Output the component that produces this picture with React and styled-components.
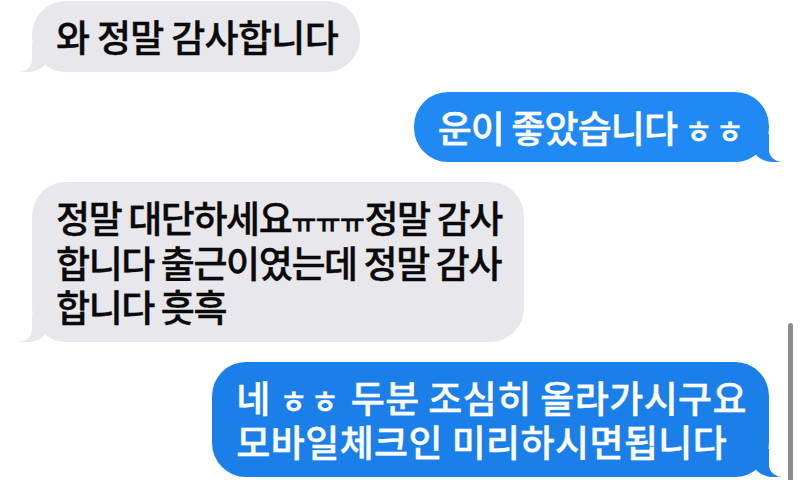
import React from 'react';
import styled, { createGlobalStyle, css } from 'styled-components';

const GlobalStyle = createGlobalStyle`
    html, body {
        margin: 0;
        padding: 0;
        background: #ffffff;
        overflow: hidden;
    }
`;

const Screen = styled.div`
    position: relative;
    width: 800px;
    height: 480px;
    overflow: hidden;
    background: #ffffff;
    font-family: "Noto Sans CJK KR", "Noto Sans", sans-serif;
`;

const Thread = styled.div`
    display: flex;
    flex-direction: column;
    gap: 20px;
    padding-top: 1px;
`;

const Row = styled.div`
    display: flex;
    justify-content: ${(p) => (p.$mine ? 'flex-end' : 'flex-start')};
    padding: ${(p) => (p.$mine ? '0 31px 0 0' : '0 0 0 32px')};
`;

const leftTail = css`
    &::before {
        content: '';
        position: absolute;
        bottom: 0;
        left: -12px;
        width: 30px;
        height: 28px;
        background: ${(p) => p.$bg};
        border-bottom-right-radius: 22px 20px;
    }
    &::after {
        content: '';
        position: absolute;
        bottom: 0;
        left: -15px;
        width: 15px;
        height: 28px;
        background: #ffffff;
        border-bottom-right-radius: 14px 12px;
    }
`;

const rightTail = css`
    &::before {
        content: '';
        position: absolute;
        bottom: 0;
        right: -12px;
        width: 30px;
        height: 28px;
        background: ${(p) => p.$bg};
        border-bottom-left-radius: 22px 20px;
    }
    &::after {
        content: '';
        position: absolute;
        bottom: 0;
        right: -15px;
        width: 15px;
        height: 28px;
        background: #ffffff;
        border-bottom-left-radius: 14px 12px;
    }
`;

const Bubble = styled.div`
    position: relative;
    padding: 13px 22px 13px 24px;
    border-radius: 34px;
    background: ${(p) => p.$bg};
    color: ${(p) => (p.$mine ? '#ffffff' : '#0a0a0a')};
    font-size: 37px;
    font-weight: 500;
    line-height: 44.5px;
    letter-spacing: ${(p) => p.$track || 0}px;
    -webkit-text-stroke: 0.4px currentColor;
    white-space: nowrap;
    ${(p) => (p.$mine ? rightTail : leftTail)}
`;

const Text = styled.span`
    position: relative;
    z-index: 1;
`;

const Jamo = styled.span`
    font-size: ${(p) => p.$size || 0.83}em;
    letter-spacing: ${(p) => p.$track || 0}px;
    line-height: 0;
`;

const Scrollbar = styled.div`
    position: absolute;
    right: 7px;
    top: 323px;
    width: 5px;
    height: 170px;
    border-radius: 3px;
    background: #8c8c8c;
`;

const GREY = '#e8e8ec';
const BLUE = '#2089f3';
const BLUE_DARK = '#1b7fea';

const App = () => (
    <Screen>
        <GlobalStyle />
        <Thread>
            <Row>
                <Bubble $bg={GREY} $track={-0.7}>
                    <Text>와 정말 감사합니다</Text>
                </Bubble>
            </Row>
            <Row $mine>
                <Bubble $mine $bg={BLUE} $track={-0.9}>
                    <Text>
                        운이 좋았습니다 <Jamo $track={3}>ㅎㅎ</Jamo>
                    </Text>
                </Bubble>
            </Row>
            <Row>
                <Bubble $bg={GREY} $track={-1.4}>
                    <Text>
                        정말 대단하세요<Jamo $size={0.73} $track={-0.5}>ㅠㅠㅠ</Jamo>정말 감사
                        <br />
                        합니다 출근이였는데 정말 감사
                        <br />
                        합니다 흣흑
                    </Text>
                </Bubble>
            </Row>
            <Row $mine>
                <Bubble $mine $bg={BLUE_DARK} $track={0.4}>
                    <Text>
                        네 <Jamo $track={3}>ㅎㅎ</Jamo> 두분 조심히 올라가시구요
                        <br />
                        모바일체크인 미리하시면됩니다
                    </Text>
                </Bubble>
            </Row>
        </Thread>
        <Scrollbar />
    </Screen>
);

export default App;
